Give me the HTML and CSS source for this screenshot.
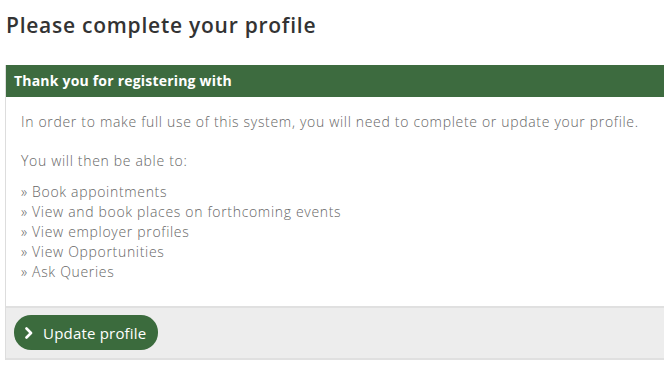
FILE: index.html
```html
<!DOCTYPE html>
<html lang="en">
<head>
    <meta charset="UTF-8">
    <meta name="viewport" content="width=device-width, initial-scale=1.0">
    <title>Please complete your profile</title>
    <link rel="stylesheet" href="styles.css">
</head>
<body>
    <h1 class="page-title">Please complete your profile</h1>

    <div class="panel">
        <div class="panel-heading">Thank you for registering with</div>

        <div class="panel-body">
            <p>In order to make full use of this system, you will need to complete or update your profile.</p>
            <p class="intro">You will then be able to:</p>
            <ul class="feature-list">
                <li>&raquo; Book appointments</li>
                <li>&raquo; View and book places on forthcoming events</li>
                <li>&raquo; View employer profiles</li>
                <li>&raquo; View Opportunities</li>
                <li>&raquo; Ask Queries</li>
            </ul>
        </div>

        <div class="panel-footer">
            <a href="#" class="btn btn-update">
                <svg class="chevron" width="10" height="12" viewBox="0 0 10 12">
                    <path d="M2.5 1.5 L7 6 L2.5 10.5" fill="none" stroke="#fff" stroke-width="2.6" stroke-linecap="round" stroke-linejoin="round"/>
                </svg>
                Update profile
            </a>
        </div>
    </div>
</body>
</html>
```

FILE: styles.css
```css
body {
    margin: 0;
    padding: 0 0 0 5px;
    font-family: 'Open Sans', 'Noto Sans', sans-serif;
    background-color: #fff;
    color: #666;
    overflow: hidden;
}

.page-title {
    margin: 0;
    padding: 11px 0 0 1px;
    height: 55px;
    box-sizing: border-box;
    font-size: 21px;
    font-weight: 600;
    color: #333;
    letter-spacing: 0.75px;
}

.panel {
    margin-top: 10px;
    border-left: 1px solid #ddd;
}

.panel-heading {
    background-color: #3d6b3f;
    color: #fff;
    font-size: 14px;
    font-weight: 700;
    height: 32px;
    line-height: 32px;
    padding: 0 8px;
    letter-spacing: 0.2px;
}

.panel-body {
    padding: 15px 15px 16px;
    font-size: 14px;
    font-weight: 300;
    line-height: 20px;
    height: 178px;
    letter-spacing: 0.68px;
    white-space: nowrap;
}

.panel-body p {
    margin: 0 0 19px;
}

.panel-body .intro {
    margin-bottom: 11px;
}

.feature-list {
    list-style: none;
    margin: 0;
    padding: 0;
}

.panel-footer {
    background-color: #ededed;
    border-top: 2px solid #e0e0e0;
    border-bottom: 2px solid #e0e0e0;
    padding: 7px 8px 8px;
}

.btn {
    display: inline-flex;
    align-items: center;
    gap: 9px;
    text-decoration: none;
}

.btn-update {
    background-color: #3b6b3d;
    color: #fff;
    height: 35px;
    padding: 0 12px 0 10px;
    border-radius: 17px;
    font-size: 15px;
    box-sizing: border-box;
    letter-spacing: 0.2px;
}

.chevron {
    display: block;
}
```
